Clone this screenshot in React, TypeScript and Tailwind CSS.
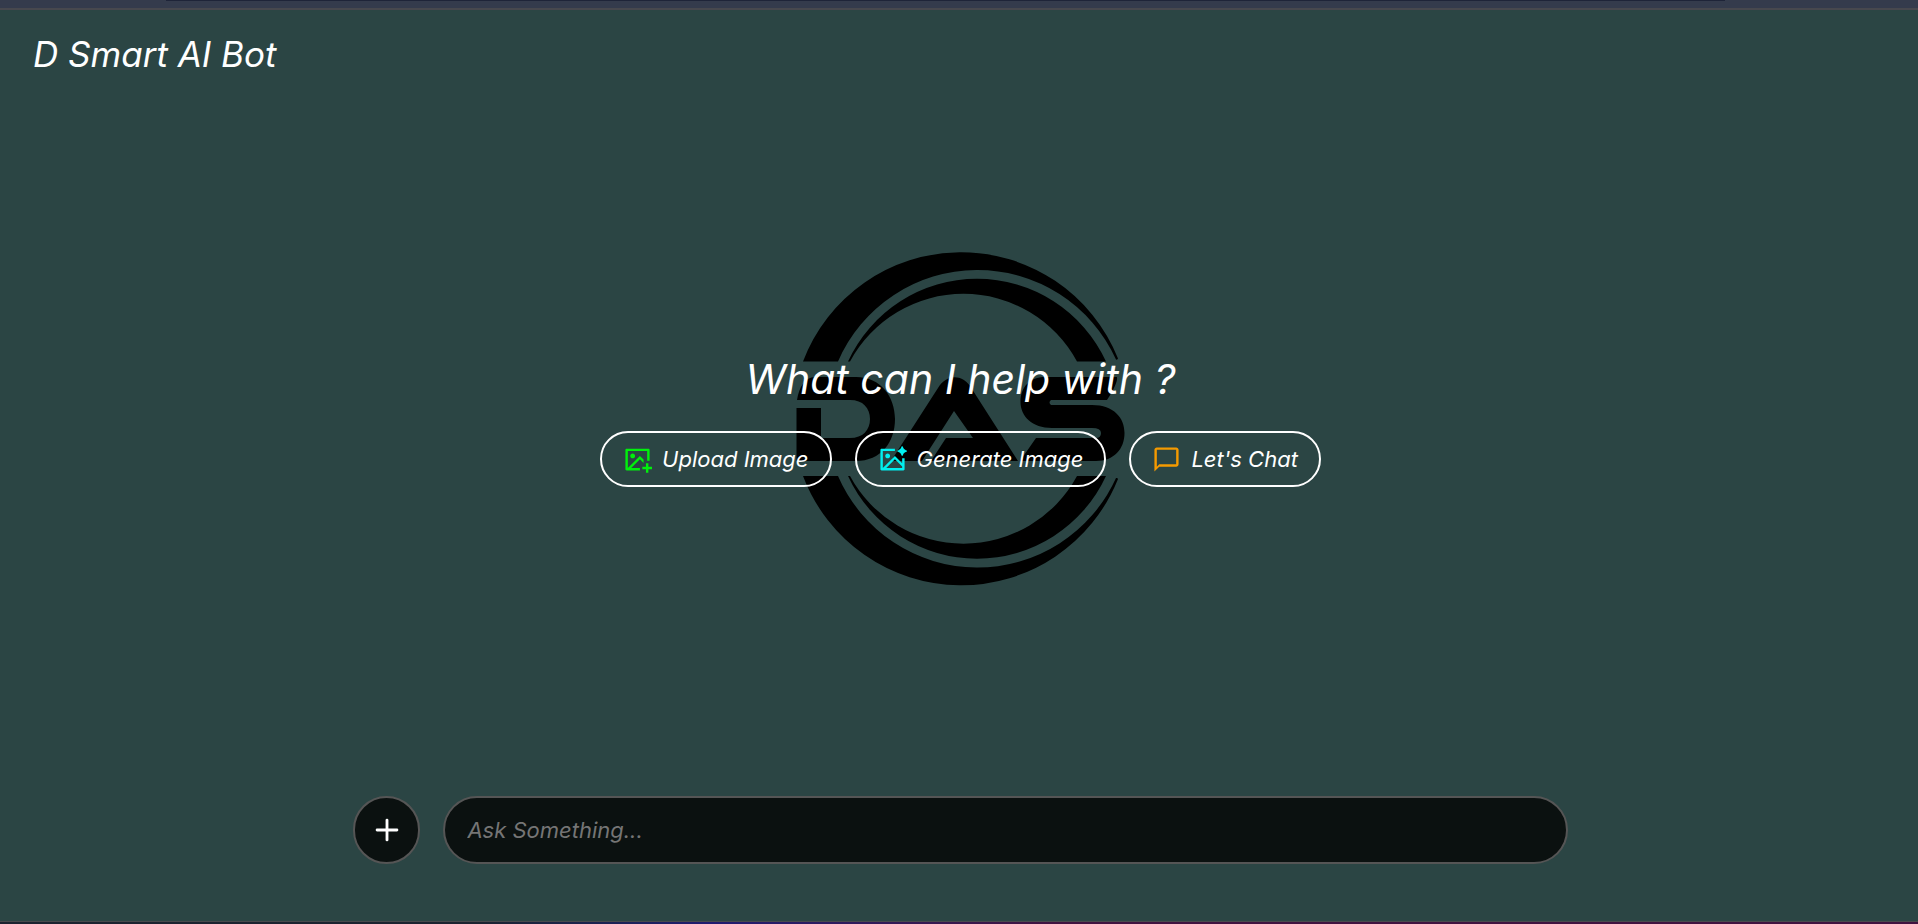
import { RiImageAddLine, RiImageAiLine } from "react-icons/ri";
import { MdChatBubbleOutline } from "react-icons/md";
import { FiPlus } from "react-icons/fi";

function Logo() {
  return (
    <svg viewBox="0 0 360 360" className="h-[360px] w-[360px]" fill="#000" aria-hidden="true">
      <path d="M23 121.5A169 169 0 0 1 338 118.5Q337.500 120 336 119.500A152 152 0 0 0 58 121.5Z" />
      <path d="M68 121.5A142 142 0 0 1 326 121.5H297A129 129 0 0 0 70 121.5Z" />
      <path d="M23 236A169 169 0 0 0 338 239Q337.500 237.500 336 238A152 152 0 0 1 58 236Z" />
      <path d="M68 236A142 142 0 0 0 326 236H297A129 129 0 0 1 70 236Z" />
      <path d="M17 160C19 147 25 137 35 137H76C101 137 115 157 115 179C115 202 101 221 76 221H16.5V168H41V198H70C83 198 90 190 90 179C90 168 83 160 70 160Z" />
      <path d="M111 221L158 148C166 134 182 134 190 146L238 221H151L166 198H193L174 171L142 221Z" />
      <path d="M265 137H337Q338 143 327 160H271Q268 162.500 271 165H312C334 165 344.500 178 344.500 193C344.500 209 334 221 316 221H240L256 198H316Q321 198 321 193Q321 188 312 188H272C252 188 240.500 176 240.500 162C240.500 147 250 137 265 137Z" />
    </svg>
  );
}

const actions = [
  { label: "Upload Image", Icon: RiImageAddLine, color: "text-[#00f00c]" },
  { label: "Generate Image", Icon: RiImageAiLine, color: "text-[#00f0f0]" },
  { label: "Let's Chat", Icon: MdChatBubbleOutline, color: "text-[#f59a00]" },
];

export default function App() {
  return (
    <div className="flex min-h-screen flex-col bg-[#2b4544] font-[Inter,sans-serif] text-white italic">
      <div className="flex h-[10px] flex-col border-b-2 border-[#47484e] bg-[#343b4c] pl-[166px]">
        <div className="h-px w-[89%] bg-[#1e2438]" />
      </div>
      <div className="flex flex-1 flex-col pl-[3px]">
        <header className="px-[30px] pt-6">
          <h1 className="text-[35px] leading-10">D Smart AI Bot</h1>
        </header>
        <main className="flex flex-1 flex-col items-center pt-[281px]">
          <div className="relative flex flex-col items-center">
            <div className="pointer-events-none absolute -top-[115px] left-1/2 -translate-x-1/2">
              <Logo />
            </div>
            <h2 className="relative text-[41px] leading-12">What can I help with ?</h2>
            <div className="relative mt-7 flex gap-[23px]">
              {actions.map(({ label, Icon, color }) => (
                <button
                  key={label}
                  type="button"
                  className="flex h-14 items-center gap-[10px] rounded-full border-2 border-white px-[21px] text-[22px] whitespace-nowrap italic"
                >
                  <Icon size={29} className={color} />
                  {label}
                </button>
              ))}
            </div>
          </div>
        </main>
        <form
          className="mx-auto mb-[57px] flex w-[63.4%] items-center gap-[23px]"
          onSubmit={(event) => event.preventDefault()}
        >
          <button
            type="button"
            aria-label="Add attachment"
            className="flex h-[68px] w-[67px] shrink-0 items-center justify-center rounded-full border-2 border-[#555] bg-[#0b1110]"
          >
            <FiPlus size={34} />
          </button>
          <input
            type="text"
            aria-label="Message"
            placeholder="Ask Something..."
            className="h-[68px] min-w-0 flex-1 rounded-full border-2 border-[#555] bg-[#0b1110] px-[22px] text-[22px] italic outline-none placeholder:text-[#757575]"
          />
        </form>
      </div>
      <div className="h-[3px] border-t border-[#484a4d] bg-linear-to-r from-[#1b2330] from-25% via-[#201a70] via-37% to-[#401240] to-55%" />
    </div>
  );
}
